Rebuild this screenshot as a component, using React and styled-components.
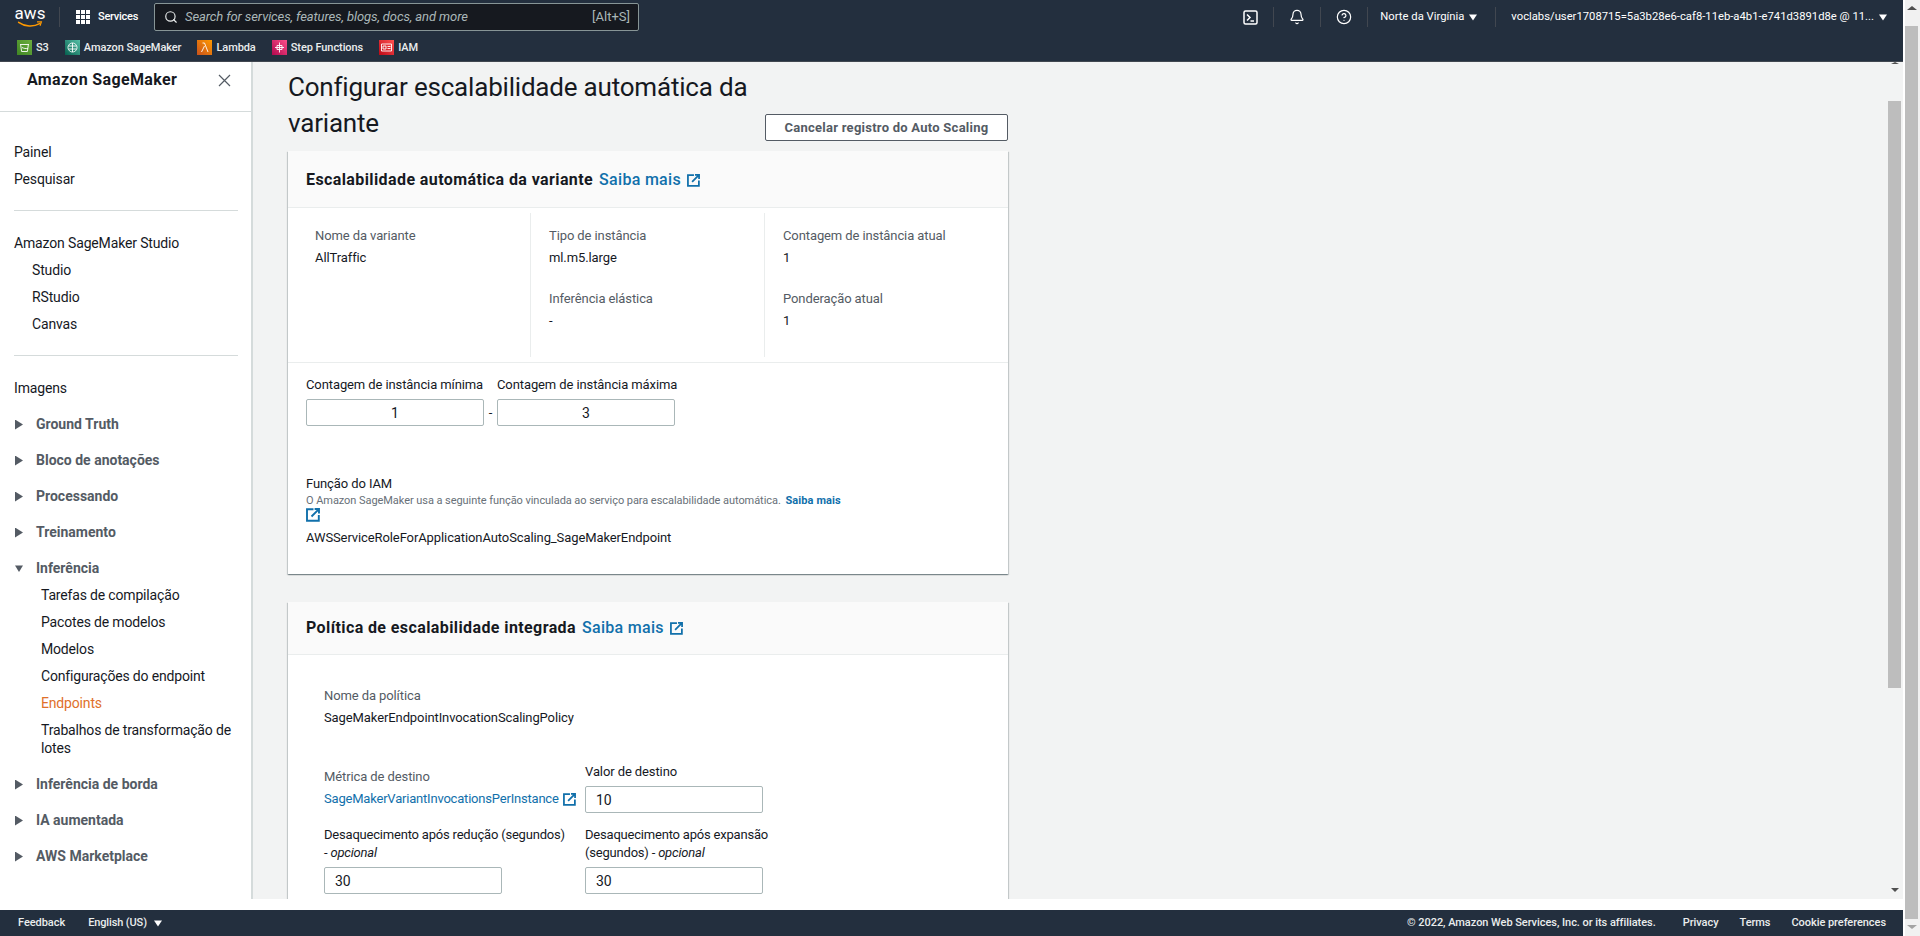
import styled, { createGlobalStyle } from "styled-components";
import { Bell, CircleHelp, Search } from "lucide-react";

const GlobalStyle = createGlobalStyle`
  html, body {
    margin: 0;
    height: 100%;
    overflow: hidden;
    background: #fff;
    font-family: "Roboto", "Liberation Sans", sans-serif;
    font-size: 14px;
    line-height: 18px;
    color: #16191f;
  }
  * { box-sizing: border-box; }
`;

const LINK_BLUE = "#1170ab";

const ExternalIcon = ({ size = 13, color = LINK_BLUE }) => (
  <svg width={size} height={size} viewBox="0 0 14 14" fill="none" stroke={color} strokeWidth="1.9">
    <path d="M7.5 1.2H1v11.6h11.8V7" />
    <path d="M5.5 8.5 12.4 1.6M8.6 1h4.4v4.4" />
  </svg>
);

const Caret = ({ color = "#fff" }) => (
  <svg width="8" height="7" viewBox="0 0 8 7" fill={color}>
    <path d="M0 .5h8L4 6.5z" />
  </svg>
);

const bookmarks = [
  {
    name: "S3",
    from: "#3f8624",
    to: "#6cae3e",
    art: <path d="M3 4.5h9M3.6 4.5l1 7h5.8l1-7M5 7.5c2 1 3.5 1.2 6 1" />,
  },
  {
    name: "Amazon SageMaker",
    from: "#055f4e",
    to: "#56c0a7",
    art: <path d="M7.5 3a4.5 4.5 0 1 0 .01 0M7.5 3v9M3.5 6h8M3.5 9h8" />,
  },
  {
    name: "Lambda",
    from: "#c8511b",
    to: "#ff9900",
    art: <path d="M5.5 3h2l3.5 9M7.5 6l-3 6" />,
  },
  {
    name: "Step Functions",
    from: "#b0084d",
    to: "#ff4f8b",
    art: <path d="M7.5 2.5v10M3 7.5h9M5 5.5h5v4H5z" />,
  },
  {
    name: "IAM",
    from: "#bd0816",
    to: "#ff5252",
    art: <path d="M2.5 4h10v7h-10zM4 6h3v3H4zM8.5 6.5h3M8.5 8.5h3" />,
  },
];

const BookmarkIcon = ({ from, to, children }) => (
  <IconTile $from={from} $to={to}>
    <svg width="15" height="15" viewBox="0 0 15 15" fill="none" stroke="#fff" strokeWidth="0.9">
      {children}
    </svg>
  </IconTile>
);

const sideNav = [
  { type: "plain", label: "Painel" },
  { type: "plain", label: "Pesquisar" },
  { type: "divider" },
  { type: "plain", label: "Amazon SageMaker Studio" },
  { type: "sub", label: "Studio" },
  { type: "sub", label: "RStudio" },
  { type: "sub", label: "Canvas" },
  { type: "divider" },
  { type: "plain", label: "Imagens" },
  { type: "group", label: "Ground Truth", spaced: true },
  { type: "group", label: "Bloco de anotações" },
  { type: "group", label: "Processando" },
  { type: "group", label: "Treinamento" },
  {
    type: "group",
    label: "Inferência",
    open: true,
    children: [
      { label: "Tarefas de compilação" },
      { label: "Pacotes de modelos" },
      { label: "Modelos" },
      { label: "Configurações do endpoint" },
      { label: "Endpoints", active: true },
      { label: "Trabalhos de transformação de lotes" },
    ],
  },
  { type: "group", label: "Inferência de borda" },
  { type: "group", label: "IA aumentada" },
  { type: "group", label: "AWS Marketplace" },
];

const renderNavItem = (item, i) => {
  if (item.type === "divider") return <NavDivider key={i} />;
  if (item.type === "plain") return <NavRow key={i}>{item.label}</NavRow>;
  if (item.type === "sub") return <NavSubRow key={i}>{item.label}</NavSubRow>;
  return (
    <div key={i}>
      <GroupRow $spaced={item.spaced}>
        <GroupCaret $open={item.open} />
        {item.label}
      </GroupRow>
      {item.children && (
        <GroupChildren>
          {item.children.map((child) => (
            <ChildRow key={child.label} $active={child.active}>
              {child.label}
            </ChildRow>
          ))}
        </GroupChildren>
      )}
    </div>
  );
};

const App = () => {
  return (
    <Screen>
      <GlobalStyle />
      <Page>
        <Header>
          <TopRow>
            <LogoBox>
              <LogoText>aws</LogoText>
              <svg width="28" height="8" viewBox="0 0 28 8" fill="none">
                <path d="M1 1.5c7 5 17 5.5 24 1.5" stroke="#ff9900" strokeWidth="1.8" strokeLinecap="round" />
                <path d="M22 1h5l-1.5 4.5" stroke="#ff9900" strokeWidth="1.4" />
              </svg>
            </LogoBox>
            <TopDivider $first />
            <ServicesButton>
              <svg width="14" height="14" viewBox="0 0 14 14" fill="#fff">
                {[0, 5, 10].map((y) =>
                  [0, 5, 10].map((x) => <rect key={`${x}-${y}`} x={x} y={y} width="4" height="4" />)
                )}
              </svg>
              Services
            </ServicesButton>
            <SearchBox>
              <Search size={14} color="#eaeded" strokeWidth={2} />
              <SearchText>Search for services, features, blogs, docs, and more</SearchText>
              <SearchHint>[Alt+S]</SearchHint>
            </SearchBox>
            <TopRight>
              <TopIcon>
                <svg width="15" height="15" viewBox="0 0 15 15" fill="none" stroke="#fff" strokeWidth="1.5">
                  <rect x="1" y="1" width="13" height="13" rx="1.5" />
                  <path d="M4 4.5 7 7.5l-3 3M7.5 11H11" />
                </svg>
              </TopIcon>
              <TopDivider />
              <TopIcon>
                <Bell size={16} color="#fff" strokeWidth={1.8} />
              </TopIcon>
              <TopDivider />
              <TopIcon>
                <CircleHelp size={16} color="#fff" strokeWidth={1.8} />
              </TopIcon>
              <TopDivider />
              <MenuLabel>
                Norte da Virgínia <Caret />
              </MenuLabel>
              <TopDivider />
              <MenuLabel>
                voclabs/user1708715=5a3b28e6-caf8-11eb-a4b1-e741d3891d8e @ 11... <Caret />
              </MenuLabel>
            </TopRight>
          </TopRow>
          <BookmarkRow>
            {bookmarks.map((b) => (
              <Bookmark key={b.name}>
                <BookmarkIcon from={b.from} to={b.to}>
                  {b.art}
                </BookmarkIcon>
                {b.name}
              </Bookmark>
            ))}
          </BookmarkRow>
        </Header>

        <Body>
          <Sidebar>
            <SideHeader>
              <SideTitle>Amazon SageMaker</SideTitle>
              <svg width="13" height="13" viewBox="0 0 13 13" stroke="#545b64" strokeWidth="1.2">
                <path d="M1 1l11 11M12 1 1 12" />
              </svg>
            </SideHeader>
            <SideNav>{sideNav.map(renderNavItem)}</SideNav>
          </Sidebar>

          <Main>
            <Content>
              <TitleRow>
                <PageTitle>Configurar escalabilidade automática da variante</PageTitle>
                <OutlineButton>Cancelar registro do Auto Scaling</OutlineButton>
              </TitleRow>

              <Card>
                <CardHeader>
                  <CardTitle>Escalabilidade automática da variante</CardTitle>
                  <HeaderLink>Saiba mais</HeaderLink>
                  <ExternalIcon />
                </CardHeader>
                <DetailGrid>
                  <DetailCol>
                    <Field>
                      <FieldLabel>Nome da variante</FieldLabel>
                      <FieldValue>AllTraffic</FieldValue>
                    </Field>
                  </DetailCol>
                  <DetailCol $bordered>
                    <Field>
                      <FieldLabel>Tipo de instância</FieldLabel>
                      <FieldValue>ml.m5.large</FieldValue>
                    </Field>
                    <Field>
                      <FieldLabel>Inferência elástica</FieldLabel>
                      <FieldValue>-</FieldValue>
                    </Field>
                  </DetailCol>
                  <DetailCol $bordered>
                    <Field>
                      <FieldLabel>Contagem de instância atual</FieldLabel>
                      <FieldValue>1</FieldValue>
                    </Field>
                    <Field>
                      <FieldLabel>Ponderação atual</FieldLabel>
                      <FieldValue>1</FieldValue>
                    </Field>
                  </DetailCol>
                </DetailGrid>
                <LimitsSection>
                  <LimitsRow>
                    <div>
                      <FormLabel>Contagem de instância mínima</FormLabel>
                      <TextInput $center readOnly value="1" />
                    </div>
                    <Dash>-</Dash>
                    <div>
                      <FormLabel>Contagem de instância máxima</FormLabel>
                      <TextInput $center readOnly value="3" />
                    </div>
                  </LimitsRow>
                  <RoleBlock>
                    <RoleTitle>Função do IAM</RoleTitle>
                    <RoleHint>
                      O Amazon SageMaker usa a seguinte função vinculada ao serviço para escalabilidade automática.{" "}
                      <HintLink>Saiba mais</HintLink> <ExternalIcon size={14} />
                    </RoleHint>
                    <RoleValue>AWSServiceRoleForApplicationAutoScaling_SageMakerEndpoint</RoleValue>
                  </RoleBlock>
                </LimitsSection>
              </Card>

              <Card $second>
                <CardHeader $short>
                  <CardTitle>Política de escalabilidade integrada</CardTitle>
                  <HeaderLink>Saiba mais</HeaderLink>
                  <ExternalIcon />
                </CardHeader>
                <PolicyBody>
                  <Field>
                    <FieldLabel>Nome da política</FieldLabel>
                    <FieldValue>SageMakerEndpointInvocationScalingPolicy</FieldValue>
                  </Field>
                  <PolicyGrid>
                    <MetricField>
                      <FieldLabel>Métrica de destino</FieldLabel>
                      <MetricLink>
                        SageMakerVariantInvocationsPerInstance <ExternalIcon />
                      </MetricLink>
                    </MetricField>
                    <div>
                      <FormLabel>Valor de destino</FormLabel>
                      <TextInput readOnly value="10" />
                    </div>
                    <div>
                      <FormLabel>
                        <LabelLine>Desaquecimento após redução (segundos)</LabelLine>
                        <LabelLine>
                          - <em>opcional</em>
                        </LabelLine>
                      </FormLabel>
                      <TextInput readOnly value="30" />
                    </div>
                    <div>
                      <FormLabel>
                        <LabelLine>Desaquecimento após expansão</LabelLine>
                        <LabelLine>
                          (segundos) - <em>opcional</em>
                        </LabelLine>
                      </FormLabel>
                      <TextInput readOnly value="30" />
                    </div>
                  </PolicyGrid>
                </PolicyBody>
              </Card>
            </Content>
            <InnerBar>
              <InnerArrowTop />
              <InnerThumb />
              <InnerArrowBottom />
            </InnerBar>
          </Main>
        </Body>

        <Footer>
          <FooterLink>Feedback</FooterLink>
          <FooterLang>
            English (US) <Caret />
          </FooterLang>
          <FooterRight>
            <Copyright>© 2022, Amazon Web Services, Inc. or its affiliates.</Copyright>
            <FooterLink>Privacy</FooterLink>
            <FooterLink>Terms</FooterLink>
            <FooterLink>Cookie preferences</FooterLink>
          </FooterRight>
        </Footer>
      </Page>

      <OuterBar>
        <OuterArrow />
        <OuterThumb />
        <OuterArrow $down />
      </OuterBar>
    </Screen>
  );
};

export default App;

const Screen = styled.div`
  display: flex;
  height: 100vh;
  overflow: hidden;
`;

const Page = styled.div`
  width: 1903px;
  display: flex;
  flex-direction: column;
`;

const Header = styled.header`
  height: 62px;
  flex: none;
  background-color: #232f3e;
  border-bottom: 1px solid #414750;
  color: #eaeded;
`;

const TopRow = styled.div`
  height: 34px;
  display: flex;
  align-items: center;
  padding-left: 16px;
`;

const LogoBox = styled.div`
  width: 28px;
  height: 22px;
  display: flex;
  flex-direction: column;
  align-items: center;
`;

const LogoText = styled.span`
  font-size: 17px;
  line-height: 15px;
  color: #fff;
`;

const TopDivider = styled.span`
  width: 1px;
  height: 20px;
  flex: none;
  background-color: #414750;
  margin-left: ${({ $first }) => ($first ? "15px" : "0")};
`;

const ServicesButton = styled.div`
  display: flex;
  align-items: center;
  gap: 8px;
  margin-left: 16px;
  width: 78px;
  font-size: 11px;
  font-weight: 500;
  letter-spacing: -0.25px;
  color: #fff;
`;

const SearchBox = styled.div`
  width: 485px;
  height: 28px;
  display: flex;
  align-items: center;
  padding: 0 8px 0 9px;
  background-color: #16191f;
  border: 1px solid #879596;
  border-radius: 2px;
`;

const SearchText = styled.span`
  margin-left: 7px;
  font-size: 13px;
  font-style: italic;
  letter-spacing: -0.1px;
  color: #aab7b8;
`;

const SearchHint = styled.span`
  margin-left: auto;
  font-size: 13px;
  color: #aab7b8;
`;

const TopRight = styled.div`
  margin-left: auto;
  display: flex;
  align-items: center;
  padding-right: 16px;
`;

const TopIcon = styled.div`
  display: flex;
  padding: 0 15px;
`;

const MenuLabel = styled.div`
  display: flex;
  align-items: center;
  gap: 5px;
  padding: 0 18px 0 12px;
  font-size: 11.25px;
  color: #fff;
  white-space: nowrap;
  &:last-child {
    padding: 0 0 0 15px;
  }
`;

const BookmarkRow = styled.div`
  height: 27px;
  display: flex;
  align-items: center;
  gap: 16px;
  padding-left: 17px;
`;

const Bookmark = styled.div`
  display: flex;
  align-items: center;
  gap: 4px;
  font-size: 11px;
  font-weight: 500;
  letter-spacing: -0.08px;
  color: #eaeded;
`;

const IconTile = styled.span`
  width: 15px;
  height: 15px;
  display: flex;
  background: linear-gradient(45deg, ${({ $from }) => $from}, ${({ $to }) => $to});
`;

const Body = styled.div`
  height: 837px;
  flex: none;
  display: flex;
  margin-bottom: 11px;
  overflow: hidden;
`;

const Sidebar = styled.aside`
  width: 253px;
  flex: none;
  background-color: #fff;
  border-right: 2px solid #d5dbdb;
`;

const SideHeader = styled.div`
  height: 50px;
  display: flex;
  justify-content: space-between;
  align-items: flex-start;
  padding: 9px 20px 0 27px;
  border-bottom: 1px solid #d5dbdb;
  svg {
    margin-top: 3px;
  }
`;

const SideTitle = styled.span`
  font-size: 16px;
  font-weight: 700;
  letter-spacing: 0.35px;
`;

const SideNav = styled.nav`
  padding: 26px 13px 0 14px;
`;

const NavRow = styled.div`
  padding: 4.5px 0;
  letter-spacing: -0.15px;
  color: #16191f;
`;

const NavSubRow = styled(NavRow)`
  padding-left: 18px;
`;

const NavDivider = styled.div`
  height: 1px;
  margin: 18px 0;
  background-color: #d5dbdb;
`;

const GroupRow = styled.div`
  display: flex;
  align-items: center;
  height: 36px;
  margin-top: ${({ $spaced }) => ($spaced ? "5px" : "0")};
  font-weight: 700;
  color: #545b64;
`;

const GroupCaret = styled.span`
  width: 8px;
  height: 10px;
  margin: 1px 13px 0 1px;
  background-color: #545b64;
  clip-path: ${({ $open }) =>
    $open ? "polygon(0 20%, 100% 20%, 50% 85%)" : "polygon(0 0, 100% 50%, 0 100%)"};
`;

const GroupChildren = styled.div`
  margin: -5px 0 5px;
  padding-left: 27px;
`;

const ChildRow = styled.div`
  padding: 4.5px 0;
  letter-spacing: -0.17px;
  color: ${({ $active }) => ($active ? "#e0702a" : "#16191f")};
`;

const Main = styled.main`
  flex: 1;
  min-width: 0;
  display: flex;
  justify-content: space-between;
  background-color: #f2f3f3;
  overflow: hidden;
  font-size: 13px;
  letter-spacing: -0.1px;
`;

const Content = styled.div`
  width: 755px;
  padding: 6px 0 0 35px;
`;

const TitleRow = styled.div`
  display: flex;
  align-items: flex-end;
  justify-content: space-between;
  height: 83px;
  padding-bottom: 10px;
`;

const PageTitle = styled.h1`
  width: 470px;
  margin: 0;
  font-size: 26px;
  font-weight: 400;
  line-height: 36px;
  letter-spacing: -0.2px;
`;

const OutlineButton = styled.button`
  width: 243px;
  height: 27px;
  padding: 0;
  background-color: #fff;
  border: 1px solid #545b64;
  border-radius: 2px;
  font: 700 13px "Roboto", sans-serif;
  letter-spacing: 0.25px;
  color: #545b64;
`;

const Card = styled.section`
  width: 720px;
  margin-top: ${({ $second }) => ($second ? "28px" : "0")};
  background-color: #fff;
  box-shadow: 0 1px 1px 0 rgba(0, 28, 36, 0.3), 1px 1px 1px 0 rgba(0, 28, 36, 0.15),
    -1px 1px 1px 0 rgba(0, 28, 36, 0.15);
`;

const CardHeader = styled.div`
  height: ${({ $short }) => ($short ? "53px" : "57px")};
  display: flex;
  align-items: center;
  gap: 6px;
  padding: ${({ $short }) => ($short ? "0" : "2px")} 0 0 18px;
  background-color: #fafafa;
  border-bottom: 1px solid #eaeded;
`;

const CardTitle = styled.h2`
  margin: 0;
  font-size: 16px;
  font-weight: 700;
  letter-spacing: 0.4px;
`;

const HeaderLink = styled.a`
  font-size: 16px;
  font-weight: 500;
  letter-spacing: 0.3px;
  color: ${LINK_BLUE};
`;

const DetailGrid = styled.div`
  display: grid;
  grid-template-columns: 233px 234px 234px;
  padding: 5px 0 5px 9px;
  height: 154px;
`;

const DetailCol = styled.div`
  display: flex;
  flex-direction: column;
  gap: 19px;
  padding: 12px 0 0 18px;
  border-left: ${({ $bordered }) => ($bordered ? "1px solid #eaeded" : "none")};
`;

const Field = styled.div``;

const FieldLabel = styled.div`
  line-height: 22px;
  color: #545b64;
`;

const FieldValue = styled.div`
  line-height: 22px;
  color: #16191f;
`;

const LimitsSection = styled.div`
  padding: 13px 0 27px 18px;
  border-top: 1px solid #eaeded;
`;

const LimitsRow = styled.div`
  display: flex;
  align-items: flex-end;
`;

const Dash = styled.span`
  width: 13px;
  height: 27px;
  line-height: 27px;
  text-align: center;
`;

const FormLabel = styled.label`
  display: block;
  margin-bottom: 5px;
  color: #16191f;
  white-space: nowrap;
  em {
    font-style: italic;
  }
`;

const LabelLine = styled.span`
  display: block;
  letter-spacing: -0.2px;
`;

const TextInput = styled.input`
  display: block;
  width: 178px;
  height: 27px;
  padding: 0 10px;
  background-color: #fff;
  border: 1px solid #aab7b8;
  border-radius: 2px;
  outline: none;
  font: 400 14px "Roboto", sans-serif;
  color: #16191f;
  text-align: ${({ $center }) => ($center ? "center" : "left")};
`;

const RoleBlock = styled.div`
  margin-top: 49px;
`;

const RoleTitle = styled.div`
  color: #16191f;
`;

const RoleHint = styled.div`
  width: 540px;
  font-size: 11px;
  line-height: 15px;
  letter-spacing: -0.06px;
  color: #687078;
  svg {
    display: inline-block;
    vertical-align: -3px;
  }
`;

const HintLink = styled.a`
  margin-left: 2px;
  font-weight: 700;
  letter-spacing: 0.1px;
  color: ${LINK_BLUE};
`;

const RoleValue = styled.div`
  margin-top: 6px;
  color: #16191f;
`;

const PolicyBody = styled.div`
  padding: 30px 0 60px 36px;
`;

const PolicyGrid = styled.div`
  display: grid;
  grid-template-columns: 261px 200px;
  row-gap: 13px;
  margin-top: 34px;
`;

const MetricField = styled.div`
  padding-top: 3px;
`;

const MetricLink = styled.a`
  display: flex;
  align-items: center;
  gap: 4px;
  line-height: 22px;
  letter-spacing: -0.2px;
  color: ${LINK_BLUE};
  white-space: nowrap;
`;

const InnerBar = styled.div`
  width: 13px;
  margin-right: 2px;
  display: flex;
  flex-direction: column;
  align-items: center;
`;

const InnerArrowTop = styled.span`
  width: 0;
  height: 0;
  border: 4px solid transparent;
  border-top-width: 0;
  border-bottom: 2px solid #505050;
`;

const InnerThumb = styled.span`
  width: 13px;
  height: 587px;
  margin-top: 37px;
  background-color: #bdbdbd;
`;

const InnerArrowBottom = styled.span`
  width: 0;
  height: 0;
  margin-top: auto;
  margin-bottom: 7px;
  border: 4px solid transparent;
  border-bottom-width: 0;
  border-top: 4px solid #505050;
`;

const Footer = styled.footer`
  height: 26px;
  flex: none;
  display: flex;
  align-items: center;
  padding: 0 17px 0 18px;
  background-color: #232f3e;
  font-size: 11px;
  font-weight: 500;
  letter-spacing: -0.05px;
  color: #eaeded;
`;

const FooterLink = styled.a`
  color: #eaeded;
`;

const FooterLang = styled.div`
  display: flex;
  align-items: center;
  gap: 7px;
  margin-left: 23px;
  letter-spacing: -0.12px;
`;

const FooterRight = styled.div`
  display: flex;
  gap: 21px;
  margin-left: auto;
`;

const Copyright = styled.span`
  margin-right: 6px;
`;

const OuterBar = styled.div`
  width: 15px;
  margin-left: 2px;
  display: flex;
  flex-direction: column;
  align-items: flex-start;
  background-color: #f1f1f1;
`;

const OuterArrow = styled.span`
  width: 0;
  height: 0;
  margin: 6px 0 0 2px;
  border: 5px solid transparent;
  ${({ $down }) =>
    $down
      ? "border-bottom-width: 0; border-top: 4px solid #a3a3a3;"
      : "border-top-width: 0; border-bottom: 4px solid #505050;"}
`;

const OuterThumb = styled.span`
  width: 13px;
  height: 893px;
  margin-top: 16px;
  background-color: #bdbdbd;
`;
